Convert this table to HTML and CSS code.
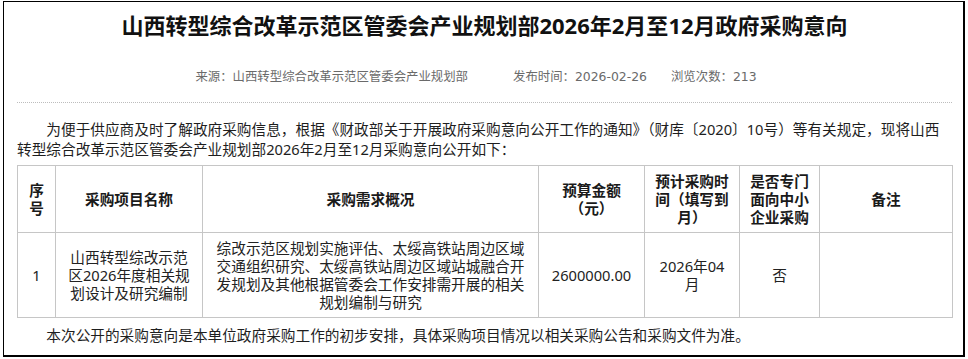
FILE: index.html
```html
<!DOCTYPE html>
<html lang="zh-CN">
<head>
<meta charset="utf-8">
<title>政府采购意向</title>
<link rel="stylesheet" href="styles.css">
</head>
<body>
<div class="frame">
  <h1 class="title">山西转型综合改革示范区管委会产业规划部2026年2月至12月政府采购意向</h1>
  <div class="meta">
    <span class="source">来源：山西转型综合改革示范区管委会产业规划部</span>
    <span class="date">发布时间：2026-02-26</span>
    <span class="views">浏览次数：213</span>
  </div>
  <div class="content">
    <p class="intro">为便于供应商及时了解政府采购信息，根据《财政部关于开展政府采购意向公开工作的通知》（财库〔2020〕10号）等有关规定，现将山西转型综合改革示范区管委会产业规划部2026年2月至12月采购意向公开如下：</p>
    <table class="plan">
      <colgroup>
        <col class="c1"><col class="c2"><col class="c3"><col class="c4"><col class="c5"><col class="c6"><col class="c7">
      </colgroup>
      <thead>
        <tr>
          <th class="narrow">序号</th>
          <th>采购项目名称</th>
          <th>采购需求概况</th>
          <th>预算金额（元）</th>
          <th>预计采购时间（填写到月）</th>
          <th>是否专门面向中小企业采购</th>
          <th>备注</th>
        </tr>
      </thead>
      <tbody>
        <tr>
          <td>1</td>
          <td>山西转型综改示范区2026年度相关规划设计及研究编制</td>
          <td class="desc">综改示范区规划实施评估、太绥高铁站周边区域交通组织研究、太绥高铁站周边区域站城融合开发规划及其他根据管委会工作安排需开展的相关规划编制与研究</td>
          <td>2600000.00</td>
          <td>2026年04月</td>
          <td>否</td>
          <td></td>
        </tr>
      </tbody>
    </table>
    <p class="note">本次公开的采购意向是本单位政府采购工作的初步安排，具体采购项目情况以相关采购公告和采购文件为准。</p>
  </div>
</div>
</body>
</html>
```

FILE: styles.css
```css
html, body {
  margin: 0;
  padding: 0;
  background: #fff;
}

body {
  font-family: "Noto Sans", "Noto Sans CJK SC", sans-serif;
  color: #222;
}

.frame {
  box-sizing: border-box;
  width: 962px;
  height: 356px;
  margin: 1px 0 0 3px;
  border-style: solid;
  border-color: #000;
  border-width: 1px 2px 2px 1px;
  padding: 0 11px 0 13px;
}

.title {
  margin: 0;
  padding-top: 8px;
  font-size: 22px;
  line-height: 30px;
  font-weight: 700;
  text-align: center;
  color: #111;
}

.meta {
  display: flex;
  justify-content: center;
  margin-top: 27px;
  padding-right: 17px;
  font-family: "DejaVu Sans", "Noto Sans CJK SC", sans-serif;
  font-size: 12.4px;
  line-height: 20px;
  color: #6a6a6a;
}

.meta .date {
  margin-left: 45px;
}

.meta .views {
  margin-left: 24px;
}

.content {
  margin-top: 15px;
  border-top: 1px dotted #bdbdbd;
  font-size: 14.67px;
  line-height: 19px;
  color: #1e1e1e;
}

.intro {
  margin: 16px 0 0;
  padding-right: 12px;
  text-indent: 2em;
  line-height: 20px;
}

.plan {
  width: 935px;
  margin-top: 6px;
  border-collapse: collapse;
  table-layout: fixed;
  font-size: 14.67px;
  line-height: 18px;
}

.c1 { width: 38px; }
.c2 { width: 147px; }
.c3 { width: 336px; }
.c4 { width: 106px; }
.c5 { width: 95px; }
.c6 { width: 80px; }
.c7 { width: 133px; }

.plan th,
.plan td {
  border: 1px solid #c6c6c6;
  text-align: center;
  vertical-align: middle;
  padding: 6px 10px;
}

.plan th {
  height: 54px;
  font-weight: 700;
  color: #1a1a1a;
}

.plan th.narrow {
  padding: 6px 6px;
}

.plan td {
  height: 72px;
  color: #222;
}

.plan td.desc {
  padding: 6px 12px;
}

.note {
  margin: 8px 0 0;
  text-indent: 2em;
}
```
